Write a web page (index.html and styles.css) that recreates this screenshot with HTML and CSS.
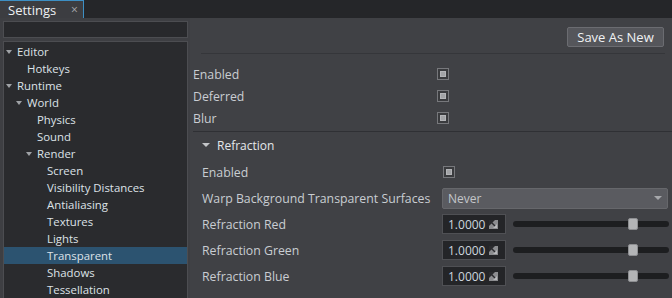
FILE: index.html
```html
<!DOCTYPE html>
<html>
<head>
<meta charset="utf-8">
<link rel="stylesheet" href="styles.css">
</head>
<body>
<div class="tabbar">
  <div class="tab"><span class="tab-title">Settings</span><span class="tab-close">×</span></div>
</div>
<div class="main">
  <div class="left">
    <div class="search"></div>
    <div class="tree">
      <div class="node l0"><span class="arrow"></span>Editor</div>
      <div class="node l1"><span class="spacer"></span>Hotkeys</div>
      <div class="node l0"><span class="arrow"></span>Runtime</div>
      <div class="node l1"><span class="arrow"></span>World</div>
      <div class="node l2"><span class="spacer"></span>Physics</div>
      <div class="node l2"><span class="spacer"></span>Sound</div>
      <div class="node l2"><span class="arrow"></span>Render</div>
      <div class="node l3"><span class="spacer"></span>Screen</div>
      <div class="node l3"><span class="spacer"></span>Visibility Distances</div>
      <div class="node l3"><span class="spacer"></span>Antialiasing</div>
      <div class="node l3"><span class="spacer"></span>Textures</div>
      <div class="node l3"><span class="spacer"></span>Lights</div>
      <div class="node l3 selected"><span class="spacer"></span>Transparent</div>
      <div class="node l3"><span class="spacer"></span>Shadows</div>
      <div class="node l3"><span class="spacer"></span>Tessellation</div>
    </div>
  </div>
  <div class="right">
    <div class="toolbar"><button class="btn">Save As New</button></div>
    <div class="sep"></div>
    <div class="props">
      <div class="prow"><span class="plabel">Enabled</span><span class="check"><span></span></span></div>
      <div class="prow"><span class="plabel">Deferred</span><span class="check"><span></span></span></div>
      <div class="prow"><span class="plabel">Blur</span><span class="check"><span></span></span></div>
    </div>
    <div class="section">
      <div class="section-head"><span class="sarrow"></span>Refraction</div>
      <div class="section-body">
        <div class="srow"><span class="plabel">Enabled</span><span class="check"><span></span></span></div>
        <div class="srow"><span class="plabel">Warp Background Transparent Surfaces</span>
          <div class="combo"><span>Never</span><span class="carrow"></span></div></div>
        <div class="srow"><span class="plabel">Refraction Red</span>
          <div class="valrow"><div class="spin"><span>1.0000</span><svg class="sicon" width="9" height="9" viewBox="0 0 9 9"><rect width="9" height="9" fill="#8c8d90"/><path d="M0 0H6L0 6Z" fill="#2a2b2e"/><path d="M1.5 1.5L7.5 7.5" stroke="#2a2b2e" stroke-width="1.4"/><path d="M4 8H8V4Z" fill="#b8b9bc"/></svg></div>
          <div class="slider"><div class="track"></div><div class="handle" style="left:74%"></div></div></div></div>
        <div class="srow"><span class="plabel">Refraction Green</span>
          <div class="valrow"><div class="spin"><span>1.0000</span><svg class="sicon" width="9" height="9" viewBox="0 0 9 9"><rect width="9" height="9" fill="#8c8d90"/><path d="M0 0H6L0 6Z" fill="#2a2b2e"/><path d="M1.5 1.5L7.5 7.5" stroke="#2a2b2e" stroke-width="1.4"/><path d="M4 8H8V4Z" fill="#b8b9bc"/></svg></div>
          <div class="slider"><div class="track"></div><div class="handle" style="left:74%"></div></div></div></div>
        <div class="srow"><span class="plabel">Refraction Blue</span>
          <div class="valrow"><div class="spin"><span>1.0000</span><svg class="sicon" width="9" height="9" viewBox="0 0 9 9"><rect width="9" height="9" fill="#8c8d90"/><path d="M0 0H6L0 6Z" fill="#2a2b2e"/><path d="M1.5 1.5L7.5 7.5" stroke="#2a2b2e" stroke-width="1.4"/><path d="M4 8H8V4Z" fill="#b8b9bc"/></svg></div>
          <div class="slider"><div class="track"></div><div class="handle" style="left:74%"></div></div></div></div>
      </div>
    </div>
  </div>
</div>
</body>
</html>
```

FILE: styles.css
```css
* { box-sizing: border-box; }
html, body { margin: 0; padding: 0; }
body {
  width: 672px; height: 298px; overflow: hidden;
  background: #3e3f43;
  font-family: "Open Sans", "Liberation Sans", sans-serif;
  font-size: 12px;
  color: #cfd3d8;
}
.tabbar {
  height: 18px;
  background: #252629;
  display: flex;
}
.tab {
  width: 84px; height: 18px;
  background: #3c3d41;
  border-top: 1px solid #3d8fc4;
  border-right: 1px solid #3d8fc4;
  display: flex; align-items: center;
  padding-left: 8px;
  color: #eef0f2;
  font-size: 13px;
}
.tab-title { flex: 1; line-height: 16px; }
.tab-close { color: #a8a9ad; font-size: 12px; width: 12px; line-height: 16px; }
.main { display: flex; height: 280px; }
.left {
  width: 190px;
  padding: 3px 3px 0 3px;
  display: flex; flex-direction: column; gap: 3px;
}
.search {
  height: 19px;
  background: #28292c;
  border: 1px solid #4c4d51;
  width: 185px;
}
.tree {
  flex: 1;
  width: 185px;
  background: #2a2b2e;
  border: 1px solid #4c4d51;
  border-bottom: none;
  padding-top: 1px;
  color: #dde2e8;
  font-size: 11.4px;
}
.node {
  height: 17px; line-height: 17px;
  display: flex; align-items: center;
  white-space: nowrap;
}
.node.l0 { padding-left: 1px; }
.node.l1 { padding-left: 11px; }
.node.l2 { padding-left: 21px; }
.node.l3 { padding-left: 31px; }
.node.selected { background: #2c5370; }
.arrow, .spacer { width: 12px; flex: none; height: 17px; position: relative; }
.arrow::before {
  content: ""; position: absolute; left: 1px; top: 7px;
  border-left: 3.5px solid transparent; border-right: 3.5px solid transparent;
  border-top: 4px solid #9fa2a6;
}
.right {
  flex: 1;
  background: #404145;
  padding: 0 0 0 3px;
  display: flex; flex-direction: column;
}
.toolbar {
  display: flex; justify-content: flex-end;
  padding: 9px 8px 0 0;
}
.btn {
  width: 97px; height: 20px;
  background: #55565b;
  border: 1px solid #6b6c71;
  border-radius: 2px;
  color: #f0f2f4;
  font-family: inherit; font-size: 13px;
  padding: 0; line-height: 17px;
}
.sep {
  height: 1px; background: #35363a;
  margin: 6px 7px 0 8px;
}
.props { padding-top: 9px; }
.prow {
  height: 22px;
  display: grid; grid-template-columns: 244px 1fr;
  align-items: center;
}
.plabel { color: #c9cdd2; white-space: nowrap; font-size: 12.3px; }
.check {
  width: 12px; height: 12px;
  border: 1px solid #77787c;
  background: #3a3b3e;
  padding: 2px;
  display: block;
}
.check span {
  display: block; width: 6px; height: 6px;
  background: #a2a3a6;
  border: 1px solid #b4b5b8;
}
.section { border-top: 1px solid #2f3034; margin-top: 2px; }
.section-head {
  height: 26px;
  display: flex; align-items: center;
  padding-left: 8px;
  color: #e4e7ea;
  font-size: 12px;
}
.sarrow {
  width: 16px; height: 10px; position: relative; flex: none;
}
.sarrow::before {
  content: ""; position: absolute; left: 1px; top: 3px;
  border-left: 4px solid transparent; border-right: 4px solid transparent;
  border-top: 4px solid #c3c5c8;
}
.section-body { padding-left: 9px; padding-top: 1px; }
.srow {
  height: 26px;
  display: grid; grid-template-columns: 240px 1fr;
  align-items: center;
}
.srow .check { margin-left: 1px; }
.combo {
  height: 21px;
  margin-right: 4px;
  background: #5a5b60;
  border: 1px solid #66676b;
  border-radius: 2px;
  display: flex; align-items: center; justify-content: space-between;
  padding: 0 5px 0 5px;
  color: #c3c6ca;
}
.carrow {
  width: 0; height: 0;
  border-left: 4px solid transparent; border-right: 4px solid transparent;
  border-top: 4px solid #a6a8ab;
}
.valrow { display: flex; align-items: center; gap: 7px; }
.spin {
  width: 64px; height: 20px;
  background: #242528;
  border: 1px solid #4f5054;
  display: flex; align-items: center;
  padding-left: 5px;
  color: #cdd6de;
  gap: 4px;
}
.sicon { flex: none; }
.slider { position: relative; width: 156px; height: 14px; }
.track {
  position: absolute; left: 0; right: 0; top: 4px; height: 6px;
  background: #1d1e20; border-radius: 3px;
}
.handle {
  position: absolute; top: 1px; width: 10px; height: 12px;
  background: #b3b4b6; border-radius: 2px;
  border: 1px solid #8d8e91;
}
```
